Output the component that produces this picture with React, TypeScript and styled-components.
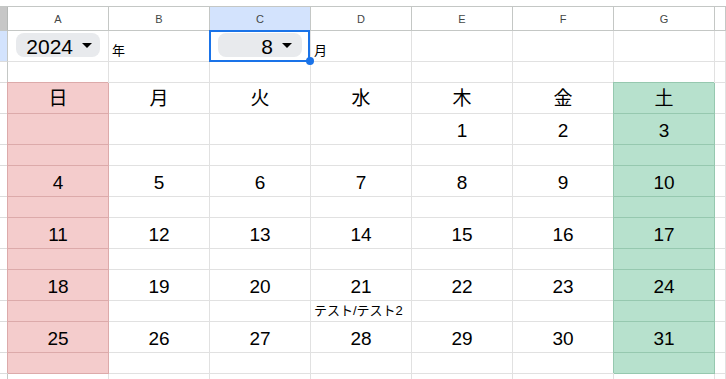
import React from "react";
import styled, { createGlobalStyle, css } from "styled-components";

const GlobalStyle = createGlobalStyle`
  html, body {
    margin: 0;
    padding: 0;
    background: #ffffff;
    overflow: hidden;
  }
  body {
    font-family: "Liberation Sans", Arial, "Noto Sans CJK JP", sans-serif;
    color: #000000;
  }
`;

const COLUMNS = "8px repeat(7, 101px) 1fr";
const LETTERS = ["A", "B", "C", "D", "E", "F", "G"];
const WEEKDAYS = ["日", "月", "火", "水", "木", "金", "土"];

type Tone = "plain" | "sun" | "sat";

const TONES: Record<Tone, { bg: string; line: string }> = {
  plain: { bg: "#ffffff", line: "#e1e1e1" },
  sun: { bg: "#f4cccc", line: "#dcaaaa" },
  sat: { bg: "#b7e1cd", line: "#96c8af" },
};

const Sheet = styled.div`
  width: 726px;
  height: 379px;
  padding-top: 6px;
  box-sizing: border-box;
  overflow: hidden;
`;

const Grid = styled.div`
  border-top: 1px solid #c4c7c5;
`;

const Row = styled.div<{ $h: number }>`
  display: grid;
  grid-template-columns: ${COLUMNS};
  height: ${(p) => p.$h}px;
`;

const Corner = styled.div`
  box-sizing: border-box;
  background: #c7c7c7;
  border-right: 1px solid #b5b8b6;
  border-bottom: 1px solid #c4c7c5;
`;

const ColHead = styled.div<{ $active?: boolean }>`
  box-sizing: border-box;
  display: flex;
  align-items: center;
  justify-content: center;
  background: ${(p) => (p.$active ? "#d3e3fd" : "#ffffff")};
  border-right: 1px solid #c4c7c5;
  border-bottom: 1px solid #c4c7c5;
  font-size: 11px;
  color: #444746;
`;

const RowHead = styled.div<{ $active?: boolean }>`
  box-sizing: border-box;
  background: ${(p) => (p.$active ? "#d3e3fd" : "#ffffff")};
  border-right: 1px solid #c4c7c5;
  border-bottom: 1px solid #dcdcdc;
`;

const Cell = styled.div<{ $tone?: Tone; $start?: boolean }>`
  box-sizing: border-box;
  min-width: 0;
  display: flex;
  align-items: flex-end;
  justify-content: ${(p) => (p.$start ? "flex-start" : "center")};
  background: ${(p) => TONES[p.$tone ?? "plain"].bg};
  border-right: 1px solid ${(p) => TONES[p.$tone ?? "plain"].line};
  border-bottom: 1px solid ${(p) => TONES[p.$tone ?? "plain"].line};
  ${(p) =>
    p.$tone && p.$tone !== "plain"
      ? css`
          box-shadow: -1px -1px 0 0 ${TONES[p.$tone].line};
        `
      : ""}
`;

const ChipCell = styled(Cell)`
  align-items: flex-start;
  padding: 2px 8px 0;
`;

const SelectedChipCell = styled(ChipCell)`
  position: relative;
`;

const Selection = styled.div`
  position: absolute;
  left: -1px;
  top: -1px;
  width: 101px;
  height: 32px;
  box-sizing: border-box;
  border: 2px solid #1a73e8;
  pointer-events: none;
`;

const FillHandle = styled.div`
  position: absolute;
  right: -6px;
  bottom: -5px;
  width: 8px;
  height: 8px;
  border-radius: 50%;
  background: #1a73e8;
`;

const Chip = styled.div<{ $padRight: number }>`
  flex: 1;
  height: 24px;
  box-sizing: border-box;
  display: flex;
  align-items: center;
  justify-content: flex-end;
  gap: 9px;
  padding: 0 ${(p) => p.$padRight}px 0 8px;
  border-radius: 8px;
  background: #e8eaed;
  font-size: 21px;
  color: #000000;
`;

const ChipValue = styled.span`
  line-height: 21px;
  padding-top: 3px;
`;

const Caret = styled.span`
  width: 0;
  height: 0;
  border-left: 5px solid transparent;
  border-right: 5px solid transparent;
  border-top: 5px solid #000000;
`;

const Label = styled.span`
  font-size: 13px;
  line-height: 15px;
  padding: 0 0 3px 3px;
  white-space: nowrap;
`;

const DayName = styled.span`
  font-size: 19px;
  line-height: 19px;
  padding-bottom: 5px;
`;

const DayNum = styled.span`
  font-size: 19px;
  line-height: 19px;
  padding-bottom: 4px;
`;

const toneOf = (col: number): Tone => (col === 0 ? "sun" : col === 6 ? "sat" : "plain");

const weeks: (number | null)[][] = [
  [null, null, null, null, 1, 2, 3],
  [4, 5, 6, 7, 8, 9, 10],
  [11, 12, 13, 14, 15, 16, 17],
  [18, 19, 20, 21, 22, 23, 24],
  [25, 26, 27, 28, 29, 30, 31],
];

// notes shown under a day: [week][column]
const notes: Record<string, string> = {
  "3-3": "テスト/テスト2",
};

function Dropdown({ value, padRight }: { value: string; padRight: number }) {
  return (
    <Chip $padRight={padRight}>
      <ChipValue>{value}</ChipValue>
      <Caret />
    </Chip>
  );
}

export default function App() {
  return (
    <>
      <GlobalStyle />
      <Sheet>
        <Grid>
          <Row $h={24}>
            <Corner />
            {LETTERS.map((l) => (
              <ColHead key={l} $active={l === "C"}>
                {l}
              </ColHead>
            ))}
            <ColHead />
          </Row>

          <Row $h={31}>
            <RowHead $active />
            <ChipCell>
              <Dropdown value="2024" padRight={8} />
            </ChipCell>
            <Cell $start>
              <Label>年</Label>
            </Cell>
            <SelectedChipCell>
              <Dropdown value="8" padRight={10} />
              <Selection>
                <FillHandle />
              </Selection>
            </SelectedChipCell>
            <Cell $start>
              <Label>月</Label>
            </Cell>
            <Cell />
            <Cell />
            <Cell />
            <Cell />
          </Row>

          <Row $h={21}>
            <RowHead />
            {LETTERS.map((l) => (
              <Cell key={l} />
            ))}
            <Cell />
          </Row>

          <Row $h={31}>
            <RowHead />
            {WEEKDAYS.map((d, i) => (
              <Cell key={d} $tone={toneOf(i)}>
                <DayName>{d}</DayName>
              </Cell>
            ))}
            <Cell />
          </Row>

          {weeks.map((week, w) => (
            <React.Fragment key={w}>
              <Row $h={31}>
                <RowHead />
                {week.map((n, i) => (
                  <Cell key={i} $tone={toneOf(i)}>
                    {n !== null && <DayNum>{n}</DayNum>}
                  </Cell>
                ))}
                <Cell />
              </Row>
              <Row $h={21}>
                <RowHead />
                {week.map((_, i) => {
                  const note = notes[`${w}-${i}`];
                  return (
                    <Cell key={i} $tone={toneOf(i)} $start={!!note}>
                      {note && <Label>{note}</Label>}
                    </Cell>
                  );
                })}
                <Cell />
              </Row>
            </React.Fragment>
          ))}

          <Row $h={31}>
            <RowHead />
            {LETTERS.map((l) => (
              <Cell key={l} />
            ))}
            <Cell />
          </Row>
        </Grid>
      </Sheet>
    </>
  );
}
